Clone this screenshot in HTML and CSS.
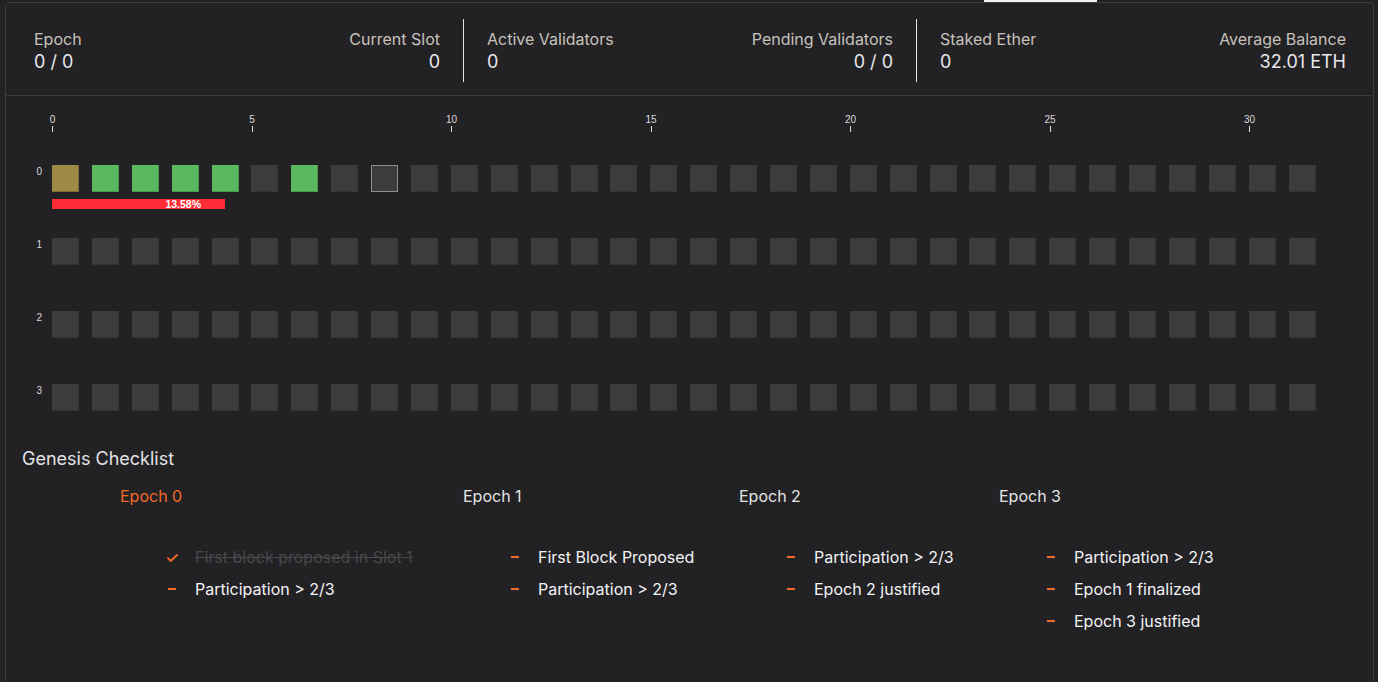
FILE: index.html
```html
<!DOCTYPE html>
<html lang="en">
<head>
<meta charset="utf-8">
<title>Genesis</title>
<link rel="stylesheet" href="styles.css">
</head>
<body>
<div class="tabbar"><span class="tab-active"></span></div>
<main class="panel">
  <header class="stats">
    <div class="group">
      <div class="stat"><div class="label">Epoch</div><div class="value">0 / 0</div></div>
      <div class="stat right"><div class="label">Current Slot</div><div class="value">0</div></div>
    </div>
    <div class="divider"></div>
    <div class="group">
      <div class="stat"><div class="label">Active Validators</div><div class="value">0</div></div>
      <div class="stat right"><div class="label">Pending Validators</div><div class="value">0 / 0</div></div>
    </div>
    <div class="divider"></div>
    <div class="group">
      <div class="stat"><div class="label">Staked Ether</div><div class="value">0</div></div>
      <div class="stat right"><div class="label">Average Balance</div><div class="value">32.01 ETH</div></div>
    </div>
  </header>

  <section class="chart">
    <div class="axis">
      <div class="tick"><div class="tick-label">0</div><div class="tick-line"></div></div>
      <div class="tick"><div class="tick-label">5</div><div class="tick-line"></div></div>
      <div class="tick"><div class="tick-label">10</div><div class="tick-line"></div></div>
      <div class="tick"><div class="tick-label">15</div><div class="tick-line"></div></div>
      <div class="tick"><div class="tick-label">20</div><div class="tick-line"></div></div>
      <div class="tick"><div class="tick-label">25</div><div class="tick-line"></div></div>
      <div class="tick"><div class="tick-label">30</div><div class="tick-line"></div></div>
    </div>

    <div class="rows">
      <div class="row">
        <div class="row-label">0</div>
        <div class="row-body">
          <div class="slots">
            <i class="s proposed"></i><i class="s ok"></i><i class="s ok"></i><i class="s ok"></i><i class="s ok"></i><i class="s"></i><i class="s ok"></i><i class="s"></i><i class="s current"></i><i class="s"></i><i class="s"></i><i class="s"></i><i class="s"></i><i class="s"></i><i class="s"></i><i class="s"></i><i class="s"></i><i class="s"></i><i class="s"></i><i class="s"></i><i class="s"></i><i class="s"></i><i class="s"></i><i class="s"></i><i class="s"></i><i class="s"></i><i class="s"></i><i class="s"></i><i class="s"></i><i class="s"></i><i class="s"></i><i class="s"></i>
          </div>
          <div class="progress" style="width:173px"><span>13.58%</span></div>
        </div>
      </div>
      <div class="row">
        <div class="row-label">1</div>
        <div class="row-body">
          <div class="slots">
            <i class="s"></i><i class="s"></i><i class="s"></i><i class="s"></i><i class="s"></i><i class="s"></i><i class="s"></i><i class="s"></i><i class="s"></i><i class="s"></i><i class="s"></i><i class="s"></i><i class="s"></i><i class="s"></i><i class="s"></i><i class="s"></i><i class="s"></i><i class="s"></i><i class="s"></i><i class="s"></i><i class="s"></i><i class="s"></i><i class="s"></i><i class="s"></i><i class="s"></i><i class="s"></i><i class="s"></i><i class="s"></i><i class="s"></i><i class="s"></i><i class="s"></i><i class="s"></i>
          </div>
        </div>
      </div>
      <div class="row">
        <div class="row-label">2</div>
        <div class="row-body">
          <div class="slots">
            <i class="s"></i><i class="s"></i><i class="s"></i><i class="s"></i><i class="s"></i><i class="s"></i><i class="s"></i><i class="s"></i><i class="s"></i><i class="s"></i><i class="s"></i><i class="s"></i><i class="s"></i><i class="s"></i><i class="s"></i><i class="s"></i><i class="s"></i><i class="s"></i><i class="s"></i><i class="s"></i><i class="s"></i><i class="s"></i><i class="s"></i><i class="s"></i><i class="s"></i><i class="s"></i><i class="s"></i><i class="s"></i><i class="s"></i><i class="s"></i><i class="s"></i><i class="s"></i>
          </div>
        </div>
      </div>
      <div class="row">
        <div class="row-label">3</div>
        <div class="row-body">
          <div class="slots">
            <i class="s"></i><i class="s"></i><i class="s"></i><i class="s"></i><i class="s"></i><i class="s"></i><i class="s"></i><i class="s"></i><i class="s"></i><i class="s"></i><i class="s"></i><i class="s"></i><i class="s"></i><i class="s"></i><i class="s"></i><i class="s"></i><i class="s"></i><i class="s"></i><i class="s"></i><i class="s"></i><i class="s"></i><i class="s"></i><i class="s"></i><i class="s"></i><i class="s"></i><i class="s"></i><i class="s"></i><i class="s"></i><i class="s"></i><i class="s"></i><i class="s"></i><i class="s"></i>
          </div>
        </div>
      </div>
    </div>
  </section>

  <section class="checklist">
    <h2 class="checklist-title">Genesis Checklist</h2>
    <div class="epochs">
      <div class="epoch">
        <h3 class="epoch-title current">Epoch 0</h3>
        <ul class="items">
          <li class="item done"><span class="mark"><svg width="11" height="8" viewBox="0 0 11 8"><path d="M1 4.2 L3.8 7 L10 1" fill="none" stroke="#f26a26" stroke-width="1.8" stroke-linecap="round" stroke-linejoin="round"/></svg></span><span class="text">First block proposed in Slot 1</span></li>
          <li class="item"><span class="mark"><span class="dash"></span></span><span class="text">Participation &gt; 2/3</span></li>
        </ul>
      </div>
      <div class="epoch">
        <h3 class="epoch-title">Epoch 1</h3>
        <ul class="items">
          <li class="item"><span class="mark"><span class="dash"></span></span><span class="text">First Block Proposed</span></li>
          <li class="item"><span class="mark"><span class="dash"></span></span><span class="text">Participation &gt; 2/3</span></li>
        </ul>
      </div>
      <div class="epoch">
        <h3 class="epoch-title">Epoch 2</h3>
        <ul class="items">
          <li class="item"><span class="mark"><span class="dash"></span></span><span class="text">Participation &gt; 2/3</span></li>
          <li class="item"><span class="mark"><span class="dash"></span></span><span class="text">Epoch 2 justified</span></li>
        </ul>
      </div>
      <div class="epoch">
        <h3 class="epoch-title">Epoch 3</h3>
        <ul class="items">
          <li class="item"><span class="mark"><span class="dash"></span></span><span class="text">Participation &gt; 2/3</span></li>
          <li class="item"><span class="mark"><span class="dash"></span></span><span class="text">Epoch 1 finalized</span></li>
          <li class="item"><span class="mark"><span class="dash"></span></span><span class="text">Epoch 3 justified</span></li>
        </ul>
      </div>
    </div>
  </section>
</main>
</body>
</html>
```

FILE: styles.css
```css
* { box-sizing: border-box; }

html, body {
  margin: 0;
  height: 100%;
  background: #222124;
  color: #e6e6e8;
  font-family: Inter, "Noto Sans", "Liberation Sans", sans-serif;
  overflow: hidden;
}

.tabbar {
  height: 2px;
  display: flex;
}
.tab-active {
  display: block;
  margin-left: 984px;
  width: 113px;
  height: 2px;
  background: #f2f2f2;
}

.panel {
  margin: 0 4px 0 5px;
  height: calc(100% - 2px);
  border: 1px solid #3b3a3e;
  border-bottom: none;
  border-radius: 5px 5px 0 0;
  display: flex;
  flex-direction: column;
}

/* ---------- stats header ---------- */
.stats {
  display: flex;
  padding: 16px 27px 13px 28px;
  border-bottom: 1px solid #3b3a3e;
}
.group {
  flex: 1;
  display: flex;
  justify-content: space-between;
  padding-top: 11px;
}
.divider {
  width: 1px;
  height: 63px;
  margin: 0 23px;
  background: #e4e4e4;
}
.stat.right { text-align: right; }
.label {
  font-size: 16px;
  line-height: 19px;
  color: #c6c3bc;
}
.value {
  margin-top: 2px;
  font-size: 18px;
  line-height: 22px;
  color: #e8e8ec;
}

/* ---------- slot chart ---------- */
.chart {
  font-family: "Liberation Sans", Arial, sans-serif;
  font-size: 10px;
  color: #dcdcdc;
}
.axis {
  display: flex;
  margin-top: 18px;
  padding-left: 46px;
}
.tick {
  width: 199.53px;
  flex: none;
}
.tick:last-child {
  width: auto;
}
.tick-label {
  width: 40px;
  margin-left: -19.5px;
  text-align: center;
  line-height: 12px;
}
.tick-line {
  width: 1px;
  height: 6px;
  background: #dcdcdc;
}

.rows {
  display: flex;
  flex-direction: column;
  gap: 46px;
  margin-top: 33px;
}
.row {
  display: flex;
  height: 27px;
}
.row-label {
  width: 46px;
  padding-right: 10px;
  text-align: right;
  line-height: 12px;
  padding-top: 1px;
}
.row-body {
  display: flex;
  flex-direction: column;
  gap: 7px;
}
.slots {
  display: flex;
  gap: 12.906px;
}
.s {
  display: block;
  width: 27px;
  height: 27px;
  background: #3c3c3e;
  box-shadow: inset -1px -1px 0 #343436;
}
.s.ok {
  background: #5cb85f;
  box-shadow: inset -1px -1px 0 #4a9a4d;
}
.s.proposed {
  background: #9e8a44;
  box-shadow: inset -1px -1px 0 #7e6e36;
}
.s.current {
  background: #3c3c3e;
  box-shadow: none;
  border: 1px solid #8e8e90;
}
.progress {
  height: 10px;
  background: #ff2b37;
  display: flex;
  justify-content: flex-end;
  padding-right: 24px;
}
.progress span {
  font-weight: bold;
  font-size: 10.5px;
  line-height: 10px;
  color: #ffffff;
}

/* ---------- checklist ---------- */
.checklist {
  padding-top: 37px;
}
.checklist-title {
  margin: 0;
  padding-left: 16px;
  font-size: 18px;
  line-height: 22px;
  font-weight: 400;
  color: #e4e4e6;
}
.epochs {
  display: grid;
  grid-template-columns: 343px 276px 260px auto;
  margin-top: 16px;
  padding-left: 114px;
}
.epoch-title {
  margin: 0;
  font-size: 16px;
  line-height: 20px;
  font-weight: 400;
  color: #e4e4e6;
}
.epoch-title.current { color: #f26a26; }
.items {
  list-style: none;
  margin: 35px 0 0;
  padding: 0 0 0 48px;
}
.item {
  display: flex;
  align-items: center;
  height: 32px;
  font-size: 16px;
  color: #f4f4f6;
}
.mark {
  width: 27px;
  flex: none;
  display: flex;
  align-items: center;
}
.item.done .mark { margin-left: -1px; width: 28px; padding-top: 2px; }
.dash {
  display: block;
  width: 8px;
  height: 2px;
  background: #f26a26;
}
.item.done .text {
  color: #48484b;
  text-decoration: line-through;
}
```
